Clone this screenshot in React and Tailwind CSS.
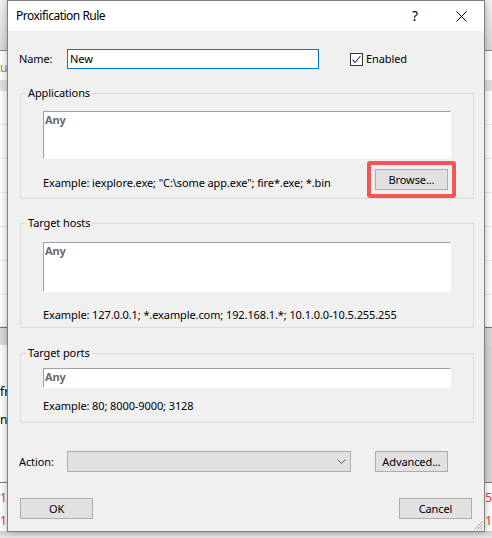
import React from 'react';

const ui = "font-['Noto_Sans',sans-serif]";

function Btn({ children, className = '' }) {
  return (
    <div className={`h-[21px] w-[73px] bg-[#e1e1e1] border border-[#adadad] flex items-center justify-center text-black ${className}`}>
      {children}
    </div>
  );
}

function Group({ title, className = '', children }) {
  return (
    <fieldset className={`ml-[12px] w-[454px] border border-[#dcdcdc] ${className}`}>
      <legend className="ml-[5px] px-[2px] leading-[14px]">{title}</legend>
      {children}
    </fieldset>
  );
}

// sunken white edit box, only top/left edges visible
function Edit({ className = '' }) {
  return (
    <div className={`bg-white border border-[#a0a0a0] border-r-white border-b-white pl-[1px] pt-[1px] font-bold text-[#6a6a6a] ${className}`}>
      Any
    </div>
  );
}

function Backdrop() {
  const rows = [34, 34, 34, 34, 34, 34, 32];
  return (
    <div className="flex flex-col w-[492px] h-[538px] text-[12px] leading-[14px] text-black">
      <div className="h-[50px] bg-linear-to-b from-[#f4f4f4] to-[#dadada]" />
      <div className="h-[1px] bg-[#8a8a8a]" />
      <div className="h-[29px] bg-white pt-[10px] text-[#a08c3c]">u</div>
      <div className="h-[11px] bg-[#e2e2e2]" />
      {rows.map((h, i) => (
        <div key={i} className="bg-white border-b border-[#ececec]" style={{ height: h }} />
      ))}
      <div className="h-[1px] bg-[#7a7a7a]" />
      <div className="h-[17px] bg-[#dadada]" />
      <div className="h-[137px] bg-white flex">
        <div className="flex-1 flex flex-col pt-[40px]">
          <span>fr</span>
          <span className="mt-[14px]">na</span>
        </div>
        <div className="w-[10px] bg-[#d6d6d6]" />
      </div>
      <div className="h-[1px] bg-[#7a7a7a]" />
      <div className="h-[48px] bg-white flex flex-col pt-[8px] text-[#e53935]">
        <div className="flex justify-between"><span>1.</span><span>5</span></div>
        <div className="flex justify-between mt-[9px]"><span>10</span><span>1</span></div>
      </div>
      <div className="flex-1 bg-linear-to-b from-[#cfcfcf] to-[#e8e8e8]" />
    </div>
  );
}

export default function App() {
  return (
    <div className={`relative w-[492px] h-[538px] overflow-hidden ${ui}`}>
      <Backdrop />

      <div className="absolute left-[7px] top-0 w-[478px] h-[532px] border border-[#7f7f7f] bg-[#f0f0f0] flex flex-col text-[11px] leading-[14px] tracking-[-0.1px] text-black shadow-[0_0_8px_rgba(0,0,0,0.3)]">
        {/* title bar */}
        <div className="h-[30px] bg-white flex items-center">
          <span className="pl-[8px] text-[12px] tracking-[-0.5px]">Proxification Rule</span>
          <div className="ml-auto w-[46px] h-[30px] flex items-center justify-center text-[14px]">?</div>
          <div className="w-[46px] h-[30px] flex items-center justify-center">
            <svg width="11" height="11" viewBox="0 0 11 11">
              <path d="M0.5 0.5L10.5 10.5M10.5 0.5L0.5 10.5" stroke="#000" strokeWidth="1" />
            </svg>
          </div>
        </div>

        {/* name row */}
        <div className="mt-[18px] h-[20px] flex items-center pl-[11px]">
          <span className="w-[48px]">Name:</span>
          <div className="w-[252px] h-[20px] bg-white border border-[#0078d7] pl-[2px] flex items-center">New</div>
          <div className="ml-[31px] w-[13px] h-[13px] border border-[#333] bg-white flex items-center justify-center">
            <svg width="11" height="11" viewBox="0 0 11 11">
              <path d="M1.5 5.5L4 8.5L9.5 2" fill="none" stroke="#333" strokeWidth="1.1" />
            </svg>
          </div>
          <span className="ml-[3px]">Enabled</span>
        </div>

        <Group className="mt-[17px]" title="Applications">
          <div className="px-[22px] pt-[11px] pb-[8px]">
            <Edit className="h-[48px]" />
            <div className="mt-[10px] flex items-start">
              <span className="mt-[6px] leading-[15px]">Example: iexplore.exe; "C:\some app.exe"; fire*.exe; *.bin</span>
              <div className="relative ml-auto mr-[3px]">
                <Btn>Browse...</Btn>
                <div className="absolute -inset-[8px] border-4 border-[#f45555] rounded-[3px]" />
              </div>
            </div>
          </div>
        </Group>

        <Group className="mt-[17px]" title="Target hosts">
          <div className="px-[22px] pt-[12px] pb-[5px]">
            <Edit className="h-[50px]" />
            <div className="mt-[15px] leading-[15px]">Example: 127.0.0.1; *.example.com; 192.168.1.*; 10.1.0.0-10.5.255.255</div>
          </div>
        </Group>

        <Group className="mt-[18px]" title="Target ports">
          <div className="px-[22px] pt-[8px] pb-[9px]">
            <Edit className="h-[20px]" />
            <div className="mt-[10px] leading-[15px]">Example: 80; 8000-9000; 3128</div>
          </div>
        </Group>

        {/* action row */}
        <div className="mt-[28px] h-[21px] flex items-center pl-[11px]">
          <span className="w-[48px]">Action:</span>
          <div className="w-[284px] h-[21px] bg-[#e1e1e1] border border-[#adadad] flex items-center justify-end pr-[4px]">
            <svg width="9" height="5" viewBox="0 0 9 5">
              <path d="M0.5 0.5L4.5 4.5L8.5 0.5" fill="none" stroke="#5a5a5a" strokeWidth="1" />
            </svg>
          </div>
          <Btn className="ml-[24px]">Advanced...</Btn>
        </div>

        <div className="mt-[26px] flex justify-between px-[12px]">
          <Btn>OK</Btn>
          <Btn>Cancel</Btn>
        </div>

        {/* size grip */}
        <svg className="absolute right-[1px] bottom-[1px]" width="10" height="10" viewBox="0 0 10 10">
          <path d="M9.5 1.5L1.5 9.5M9.5 4.5L4.5 9.5M9.5 7.5L7.5 9.5" stroke="#a8a8a8" strokeWidth="1" />
        </svg>
      </div>
    </div>
  );
}
